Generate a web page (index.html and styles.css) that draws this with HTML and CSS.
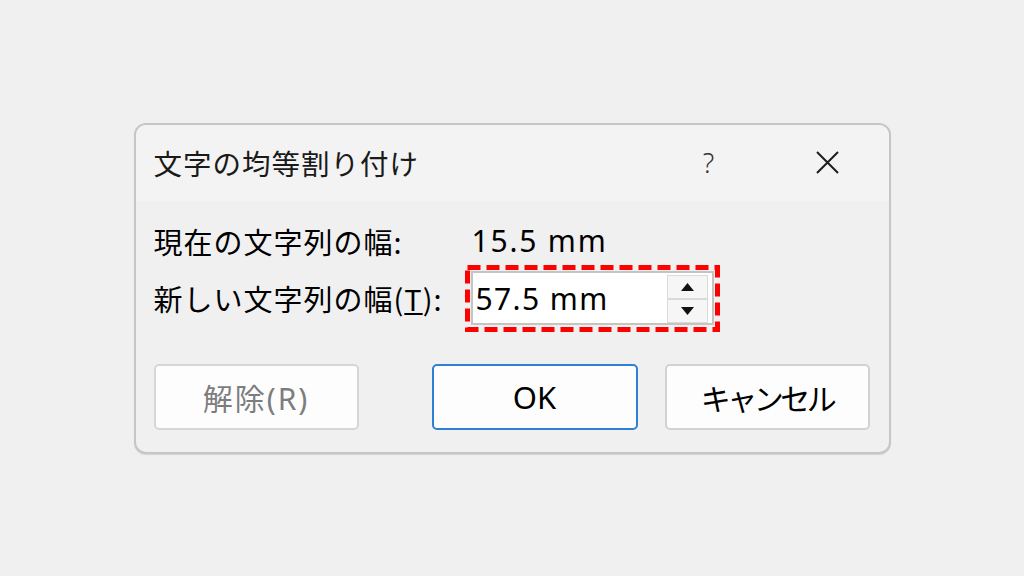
FILE: index.html
```html
<!DOCTYPE html>
<html lang="ja">
<head>
<meta charset="utf-8">
<title>文字の均等割り付け</title>
<link rel="stylesheet" href="styles.css">
</head>
<body>
<div class="page">
  <div class="dialog">
    <div class="titlebar">
      <span class="title">文字の均等割り付け</span>
      <span class="help">?</span>
      <span class="close">
        <svg width="23" height="23" viewBox="0 0 23 23"><path d="M1 1 L22 22 M22 1 L1 22" stroke="#1c1c1c" stroke-width="2" fill="none"/></svg>
      </span>
    </div>
    <div class="body">
      <div class="rows">
        <div class="label">現在の文字列の幅:</div>
        <div class="value">15.5 mm</div>
        <div class="label">新しい文字列の幅(<u>T</u>):</div>
        <div class="spin-wrap">
          <div class="spin">
            <span class="spin-text">57.5 mm</span>
            <span class="spin-btns">
              <span class="spin-btn"><svg width="13" height="8" viewBox="0 0 13 8"><path d="M6.5 0 L13 8 L0 8 Z" fill="#111"/></svg></span>
              <span class="spin-btn"><svg width="13" height="8" viewBox="0 0 13 8"><path d="M0 0 L13 0 L6.5 8 Z" fill="#111"/></svg></span>
            </span>
          </div>
          <svg class="highlight" width="255" height="67" viewBox="0 0 255 67"><rect x="2.5" y="2.5" width="250" height="62" fill="none" stroke="#ff0000" stroke-width="5" stroke-dasharray="13 6"/></svg>
        </div>
      </div>
      <div class="buttons">
        <button class="btn disabled">解除(R)</button>
        <button class="btn primary">OK</button>
        <button class="btn cancel">キャンセル</button>
      </div>
    </div>
  </div>
</div>
</body>
</html>
```
FILE: styles.css
```css
html, body {
  margin: 0;
  padding: 0;
}
body {
  background: #f0f0f0;
  font-family: "Noto Sans", "Noto Sans CJK JP", sans-serif;
  color: #000;
}
.page {
  height: 576px;
  display: flex;
  align-items: center;
  justify-content: center;
}
.dialog {
  width: 753px;
  border: 2px solid #c6c6c6;
  border-radius: 12px;
  overflow: hidden;
  background: #f0f0f0;
  box-shadow: 0 1px 1px rgba(0,0,0,0.12);
}
.titlebar {
  height: 76px;
  background: #f3f3f3;
  display: flex;
  align-items: center;
  padding-left: 18px;
}
.title {
  flex: 1;
  font-family: "Noto Sans CJK JP", sans-serif;
  font-size: 28.5px;
  color: #1a1a1a;
  letter-spacing: 1px;
}
.help {
  width: 40px;
  text-align: center;
  font-size: 27px;
  font-weight: 300;
  color: #333;
}
.close {
  width: 23px;
  height: 23px;
  margin-left: 87px;
  margin-right: 50px;
  display: flex;
}
.body {
  padding: 22px 19px 22px 18px;
}
.rows {
  display: grid;
  grid-template-columns: 317px 1fr;
  grid-template-rows: 36px 54px;
  row-gap: 12px;
  align-items: center;
}
.label {
  font-family: "Noto Sans CJK JP", sans-serif;
  font-size: 29px;
  letter-spacing: 1px;
}
.value {
  font-size: 30px;
  letter-spacing: 1.8px;
  padding-left: 1px;
}
.spin-wrap {
  position: relative;
  width: 243px;
  height: 54px;
}
.spin {
  box-sizing: border-box;
  width: 243px;
  height: 54px;
  background: #fff;
  border: 2px solid #c4c4c4;
  display: flex;
  align-items: center;
  padding: 2px 4px 1px 3px;
}
.spin-text {
  flex: 1;
  font-size: 30px;
  letter-spacing: 1.4px;
}
.spin-btns {
  display: flex;
  flex-direction: column;
  width: 41px;
  height: 48px;
  align-self: flex-start;
}
.spin-btn {
  flex: 1;
  background: #f6f6f6;
  border: 1px solid #dadada;
  display: flex;
  align-items: center;
  justify-content: center;
}
.highlight {
  position: absolute;
  left: -6px;
  top: -6px;
}
.buttons {
  display: flex;
  gap: 27px;
  margin-top: 39px;
}
.btn {
  width: 205px;
  height: 66px;
  box-sizing: border-box;
  background: #fdfdfd;
  border: 2px solid #d2d2d2;
  border-radius: 5px;
  font-family: "Noto Sans", "Noto Sans CJK JP", sans-serif;
  font-size: 30px;
  color: #000;
  padding: 0;
}
.btn.disabled {
  margin-right: auto;
  color: #7d7d7d;
  border-color: #d6d6d6;
  letter-spacing: 2px;
}
.btn.primary {
  width: 206px;
  border-color: #2f7fd6;
  font-size: 31px;
}
.btn.cancel {
  letter-spacing: -3.5px;
}
```
